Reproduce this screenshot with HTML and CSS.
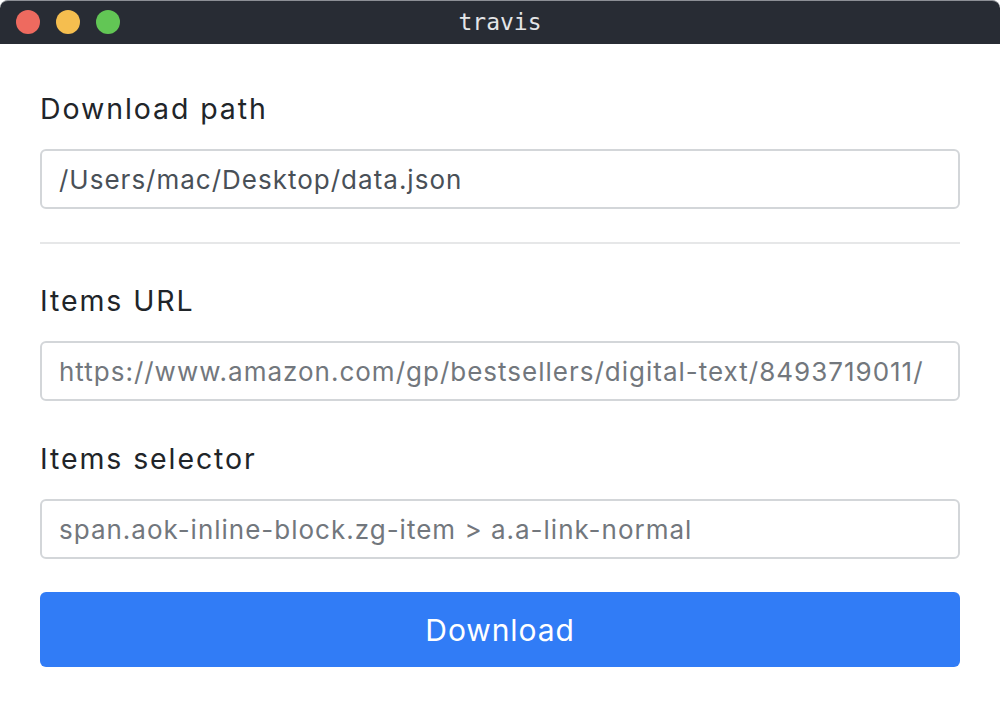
FILE: index.html
```html
<!DOCTYPE html>
<html>
<head>
<meta charset="utf-8">
<link rel="stylesheet" href="styles.css">
</head>
<body>
<div class="window">
  <div class="titlebar">
    <div class="lights">
      <span class="light red"></span>
      <span class="light yellow"></span>
      <span class="light green"></span>
    </div>
    <div class="title">travis</div>
  </div>
  <form class="content">
    <div class="group">
      <label class="label">Download path</label>
      <input class="field" type="text" value="/Users/mac/Desktop/data.json">
    </div>
    <hr class="divider">
    <div class="group">
      <label class="label">Items URL</label>
      <input class="field" type="text" placeholder="https://www.amazon.com/gp/bestsellers/digital-text/8493719011/">
    </div>
    <div class="group second">
      <label class="label">Items selector</label>
      <input class="field" type="text" placeholder="span.aok-inline-block.zg-item &gt; a.a-link-normal">
    </div>
    <button class="btn" type="button">Download</button>
  </form>
</div>
</body>
</html>
```
FILE: styles.css
```css
html, body {
  margin: 0;
  padding: 0;
  background: #ffffff;
}
.window {
  width: 1000px;
  height: 708px;
  background: #ffffff;
  font-family: Inter, "Noto Sans", sans-serif;
}
.titlebar {
  position: relative;
  height: 44px;
  background: #282c34;
  border-top: 1px solid #8c8f95;
  box-sizing: border-box;
  border-radius: 8px 8px 0 0;
  display: flex;
  align-items: center;
  justify-content: center;
}
.lights {
  position: absolute;
  left: 16px;
  top: 9px;
  display: flex;
  gap: 16px;
}
.light {
  width: 24px;
  height: 24px;
  border-radius: 50%;
  display: block;
}
.red { background: #ee6a5f; }
.yellow { background: #f5be4f; }
.green { background: #62c655; }
.title {
  font-family: "DejaVu Sans Mono", monospace;
  font-size: 23px;
  color: #e4e5e7;
  line-height: 1;
}
.content {
  display: flex;
  flex-direction: column;
  padding: 44px 40px 0;
}
.group {
  display: flex;
  flex-direction: column;
  gap: 19px;
}
.second {
  margin-top: 37px;
}
.label {
  font-size: 28.5px;
  line-height: 42px;
  letter-spacing: 1.9px;
  color: #212529;
}
.field {
  box-sizing: border-box;
  height: 60px;
  width: 100%;
  border: 2px solid #d3d6d9;
  border-radius: 6px;
  padding: 0 17px;
  font-family: Inter, "Noto Sans", sans-serif;
  font-size: 26px;
  letter-spacing: 1px;
  color: #495057;
  background: #fff;
  outline: none;
}
.field::placeholder {
  color: #72777d;
  opacity: 1;
}
.divider {
  margin: 33px 0 36px;
  border: 0;
  height: 2px;
  background: #e6e7e8;
}
.btn {
  margin-top: 33px;
  height: 75px;
  border: 0;
  border-radius: 6px;
  background: #317cf6;
  color: #ffffff;
  font-family: Inter, "Noto Sans", sans-serif;
  font-size: 30px;
  letter-spacing: 0.9px;
}
```
